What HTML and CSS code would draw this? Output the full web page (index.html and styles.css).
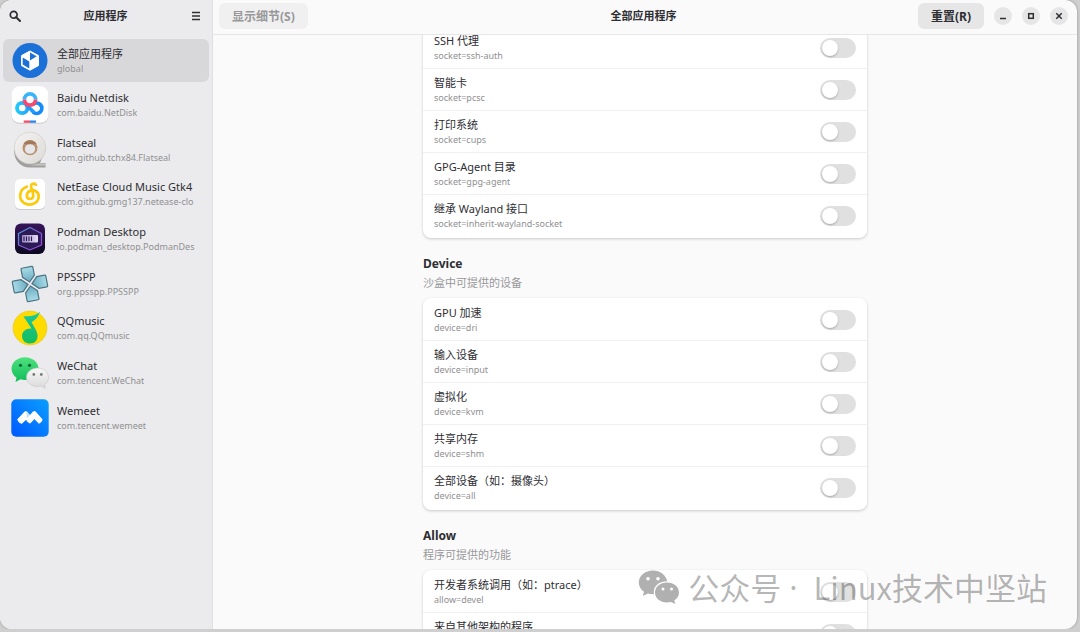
FILE: index.html
```html
<!DOCTYPE html>
<html lang="zh-CN">
<head>
    <meta charset="UTF-8"/>
    <title>全部应用程序</title>
    <link rel="stylesheet" href="styles.css">
</head>
<body>
<div class="window">
    <!-- Sidebar -->
    <aside class="sidebar">
        <div class="sidebar-header">
            <button class="icon-button" aria-label="搜索">
                <svg width="12" height="12" viewBox="0 0 12 12"><circle cx="4.7" cy="4.7" r="3.4" fill="none" stroke="#2e2e33" stroke-width="1.7"/><path d="M7.2 7.2L11 11" stroke="#2e2e33" stroke-width="2" stroke-linecap="round"/></svg>
            </button>
            <h2 class="title">应用程序</h2>
            <button class="icon-button" aria-label="菜单">
                <svg width="12" height="12" viewBox="0 0 12 12"><path d="M2 2.5h8M2 6h8M2 9.5h8" stroke="#2e2e33" stroke-width="1.7"/></svg>
            </button>
        </div>
        <nav class="app-list">
            <a href="#global" class="app active">
                <svg class="app-icon" viewBox="0 0 38 38">
                    <circle cx="19" cy="18.500" r="17.500" fill="#1c71d8"/>
                    <path d="M19 9l8.500 4.600v10L19 28.200l-8.500-4.600v-10z" fill="#fff" stroke="#fff" stroke-linejoin="round"/>
                    <path d="M11.700 15.500l6.600 4v7l-6.600-4zM19 10.500l6.700 3.800L19 18.500z" fill="#1c71d8"/>
                </svg>
                <span class="app-text"><span class="name">全部应用程序</span><span class="sub">global</span></span>
            </a>
            <a href="#baidu" class="app">
                <svg class="app-icon" viewBox="0 0 38 38">
                    <defs>
                        <linearGradient id="bl"><stop offset="0" stop-color="#1fc9fb"/><stop offset="1" stop-color="#24a5f9"/></linearGradient>
                    </defs>
                    <rect x=".5" y="1.3" width="37" height="36.5" rx="8" fill="#c9c9cb"/>
                    <rect x=".5" y=".3" width="37" height="36.5" rx="8" fill="#fff"/>
                    <g fill="none" stroke-width="3.800">
                        <circle cx="11.200" cy="22" r="5.200" stroke="url(#bl)"/>
                        <path d="M22 26a5.200 5.200 0 1 0 0-7.500" stroke="#168bfa"/>
                        <path d="M15 18.500l8 8" stroke="#1d9bfa"/>
                        <path d="M13.400 13.500a5.600 5.600 0 0 1 11.200 0" stroke="#38b5fb"/>
                        <path d="M13.400 13.500a5.600 5.600 0 0 0 11.200 0" stroke="#f7496c"/>
                    </g>
                    <path d="M12.700 34.500H19v2.300h-6.300z" fill="#f7496c"/>
                    <path d="M19 34.500h6v2.300h-6z" fill="#2485f5"/>
                </svg>
                <span class="app-text"><span class="name">Baidu Netdisk</span><span class="sub">com.baidu.NetDisk</span></span>
            </a>
            <a href="#flatseal" class="app">
                <svg class="app-icon" viewBox="0 0 38 38">
                    <defs>
                        <linearGradient id="roll" x1="0" y1="0" x2="1" y2="1"><stop offset="0" stop-color="#f4f3f1"/><stop offset="1" stop-color="#dddbd8"/></linearGradient>
                    </defs>
                    <path d="M3 19C3 29 9 36.500 19 36.500H34.500V32H29L35 18z" fill="#a0a09e"/>
                    <path d="M19 34.500h15.500v-2H28z" fill="#c6c5c3"/>
                    <ellipse cx="19" cy="17" rx="15.800" ry="16" fill="url(#roll)" stroke="#c4c2bf" stroke-width=".5"/>
                    <circle cx="19" cy="16.700" r="7.500" fill="#b9906f"/>
                    <path d="M12.500 13a7.500 7.500 0 0 1 13 0z" fill="#a27a5a"/>
                    <ellipse cx="19" cy="18" rx="5.200" ry="4.800" fill="#e6e6e8"/>
                </svg>
                <span class="app-text"><span class="name">Flatseal</span><span class="sub">com.github.tchx84.Flatseal</span></span>
            </a>
            <a href="#netease" class="app">
                <svg class="app-icon" viewBox="0 0 38 38">
                    <rect x="4" y="5" width="30" height="30" rx="5" fill="#cbcbcd"/>
                    <rect x="4" y="4" width="30" height="30" rx="5" fill="#fff"/>
                    <path d="M15.800 11.700C8 14.500 7 24 13 28c6 3.500 14.500.5 14.700-6.500.1-5.500-5.500-7.500-9-5.500-4.200 2.500-3.500 8 .3 8 3 0 3.700-2.500 3-5.500L20.200 12c-.7-3 2.200-4.300 4.800-2.300" fill="none" stroke="#fcc90b" stroke-width="2.700" stroke-linecap="round"/>
                </svg>
                <span class="app-text"><span class="name">NetEase Cloud Music Gtk4</span><span class="sub">com.github.gmg137.netease-clo</span></span>
            </a>
            <a href="#podman" class="app">
                <svg class="app-icon" viewBox="0 0 38 38">
                    <defs>
                        <linearGradient id="pod" x1="0" y1="0" x2="0" y2="1"><stop offset="0" stop-color="#37155c"/><stop offset="1" stop-color="#0c0820"/></linearGradient>
                        <linearGradient id="hex" x1="0" y1="0" x2="1" y2="1"><stop offset="0" stop-color="#4aa5d8"/><stop offset=".5" stop-color="#7a5fd6"/><stop offset="1" stop-color="#9f42d8"/></linearGradient>
                        <linearGradient id="bar"><stop offset="0" stop-color="#9d8cc9"/><stop offset="1" stop-color="#e5dcf5"/></linearGradient>
                    </defs>
                    <rect x="4" y="3.500" width="30" height="30.500" rx="6" fill="url(#pod)"/>
                    <path d="M19 7.500l11.500 6v11.500L19 30 7.500 25V13.500z" fill="#2c1a55" stroke="url(#hex)" stroke-width="1.300" stroke-linejoin="round"/>
                    <rect x="11" y="15" width="16" height="7.500" rx="1" fill="url(#bar)"/>
                    <path d="M13 16.500v4.500M15.500 16.500v4.500M18 16.500v4.500M20.500 16.500v4.500" stroke="#2b1b50" stroke-width="1.100"/>
                </svg>
                <span class="app-text"><span class="name">Podman Desktop</span><span class="sub">io.podman_desktop.PodmanDes</span></span>
            </a>
            <a href="#ppsspp" class="app">
                <svg class="app-icon" viewBox="0 0 38 38">
                    <defs>
                        <linearGradient id="pad" x1="0" y1="0" x2="0" y2="1"><stop offset="0" stop-color="#a9dbe8"/><stop offset="1" stop-color="#6aabc0"/></linearGradient>
                        <path id="blade" d="M-5 -17H5Q6 -17 6 -16V-8L0 -2L-6 -8V-16Q-6 -17 -5 -17Z" fill="url(#pad)" stroke="#4b7484" stroke-width="1.200"/>
                    </defs>
                    <g transform="translate(19 19) rotate(-11)">
                        <use href="#blade"/>
                        <use href="#blade" transform="rotate(90)"/>
                        <use href="#blade" transform="rotate(180)"/>
                        <use href="#blade" transform="rotate(270)"/>
                    </g>
                </svg>
                <span class="app-text"><span class="name">PPSSPP</span><span class="sub">org.ppsspp.PPSSPP</span></span>
            </a>
            <a href="#qqmusic" class="app">
                <svg class="app-icon" viewBox="0 0 38 38">
                    <defs>
                        <linearGradient id="note" x1="0" y1="0" x2="0" y2="1"><stop offset="0" stop-color="#1bc6a2"/><stop offset="1" stop-color="#12be5c"/></linearGradient>
                    </defs>
                    <circle cx="19" cy="19" r="17" fill="#ffdc00" stroke="#e0c52a" stroke-width=".6"/>
                    <path d="M29 2.500C25 7 20 7 12.500 7.500L20.500 19.500C15 19 11 22.500 11 27c0 5 4 7.500 8 7.500 5 0 8-3.500 7.500-8.500C26 21.500 23 18 20.500 13c2.500-1 6.500-4 8.500-10.500z" fill="url(#note)"/>
                </svg>
                <span class="app-text"><span class="name">QQmusic</span><span class="sub">com.qq.QQmusic</span></span>
            </a>
            <a href="#wechat" class="app">
                <svg class="app-icon" viewBox="0 0 38 38">
                    <defs>
                        <linearGradient id="wx" x1="0" y1="0" x2="0" y2="1"><stop offset="0" stop-color="#4fe07e"/><stop offset="1" stop-color="#0fbd58"/></linearGradient>
                        <linearGradient id="wy" x1="0" y1="0" x2="0" y2="1"><stop offset="0" stop-color="#f8f8f8"/><stop offset="1" stop-color="#dadada"/></linearGradient>
                    </defs>
                    <path d="M14 3.300C6.500 3.300.5 8.300.5 14.800c0 3.700 2 6.800 5 9L4.500 28l5-2.700c1.500.4 3 .6 4.500.6 7.500 0 13.500-4.600 13.500-11.100S21.500 3.300 14 3.300z" fill="url(#wx)"/>
                    <circle cx="9.500" cy="11.300" r="1.600" fill="#0b6b35"/><circle cx="18.500" cy="11.300" r="1.600" fill="#0b6b35"/>
                    <path d="M26.500 14C20.500 14 15.500 18 15.500 23.300s5 9.300 11 9.300c1.400 0 2.700-.2 3.800-.5l4 2.200-.9-3.500c2.600-1.800 4.100-4.300 4.100-7.500C37.500 18 32.500 14 26.500 14z" fill="url(#wy)" stroke="#c4c4c4" stroke-width=".6"/>
                    <circle cx="22.800" cy="20.500" r="1.400" fill="#7c7c7c"/><circle cx="30.300" cy="20.500" r="1.400" fill="#7c7c7c"/>
                </svg>
                <span class="app-text"><span class="name">WeChat</span><span class="sub">com.tencent.WeChat</span></span>
            </a>
            <a href="#wemeet" class="app">
                <svg class="app-icon" viewBox="0 0 38 38">
                    <defs>
                        <linearGradient id="meet" x1="1" y1="0" x2="0" y2="1"><stop offset="0" stop-color="#0aa0ff"/><stop offset="1" stop-color="#0058ff"/></linearGradient>
                    </defs>
                    <rect x=".3" y=".3" width="37.400" height="37.400" rx="5" fill="url(#meet)"/>
                    <path d="M6.300 20.500L13.800 12.500q1.200-1 2.400 0L23 20.500 19 24.500 15 20.500l-4.300 4.200z" fill="#c3dcff"/>
                    <path d="M6.300 20.500l7-7.500q1.500-1.300 2.200.5L16 20l-5.300 4.700q-3-.5-4.400-4.200zM15 20.500l7-8q1.300-1.200 2.600 0l7.100 8q-.7 3-3.700 4.200L23.300 20 19 24.500q-3-1-4-4z" fill="#fff"/>
                </svg>
                <span class="app-text"><span class="name">Wemeet</span><span class="sub">com.tencent.wemeet</span></span>
            </a>
        </nav>
    </aside>

    <!-- Permissions -->
    <main class="content">
        <header class="header">
            <div class="header-start"><button class="button" disabled>显示细节(S)</button></div>
            <h1 class="title">全部应用程序</h1>
            <div class="header-end">
                <button class="button">重置(R)</button>
                <button class="control" aria-label="最小化"><svg width="8" height="8" viewBox="0 0 8 8"><path d="M1 6.500h6" stroke="#2e2e33" stroke-width="1.500"/></svg></button>
                <button class="control" aria-label="最大化"><svg width="8" height="8" viewBox="0 0 8 8"><rect x="1.700" y="1.700" width="4.600" height="4.600" fill="none" stroke="#2e2e33" stroke-width="1.500"/></svg></button>
                <button class="control" aria-label="关闭"><svg width="8" height="8" viewBox="0 0 8 8"><path d="M1.300 1.300l5.400 5.400M6.700 1.300L1.300 6.700" stroke="#2e2e33" stroke-width="1.500"/></svg></button>
            </div>
        </header>
        <div class="scroller">
            <div class="settings">
                <section class="group">
                    <div class="card">
                        <label class="row"><span class="row-text"><span class="name">SSH 代理</span><span class="sub">socket=ssh-auth</span></span><input type="checkbox" class="switch"></label>
                        <label class="row"><span class="row-text"><span class="name">智能卡</span><span class="sub">socket=pcsc</span></span><input type="checkbox" class="switch"></label>
                        <label class="row"><span class="row-text"><span class="name">打印系统</span><span class="sub">socket=cups</span></span><input type="checkbox" class="switch"></label>
                        <label class="row"><span class="row-text"><span class="name">GPG-Agent 目录</span><span class="sub">socket=gpg-agent</span></span><input type="checkbox" class="switch"></label>
                        <label class="row"><span class="row-text"><span class="name">继承 Wayland 接口</span><span class="sub">socket=inherit-wayland-socket</span></span><input type="checkbox" class="switch"></label>
                    </div>
                </section>
                <section class="group">
                    <h3 class="group-title">Device</h3>
                    <p class="group-info">沙盒中可提供的设备</p>
                    <div class="card">
                        <label class="row"><span class="row-text"><span class="name">GPU 加速</span><span class="sub">device=dri</span></span><input type="checkbox" class="switch"></label>
                        <label class="row"><span class="row-text"><span class="name">输入设备</span><span class="sub">device=input</span></span><input type="checkbox" class="switch"></label>
                        <label class="row"><span class="row-text"><span class="name">虚拟化</span><span class="sub">device=kvm</span></span><input type="checkbox" class="switch"></label>
                        <label class="row"><span class="row-text"><span class="name">共享内存</span><span class="sub">device=shm</span></span><input type="checkbox" class="switch"></label>
                        <label class="row"><span class="row-text"><span class="name">全部设备（如：摄像头）</span><span class="sub">device=all</span></span><input type="checkbox" class="switch"></label>
                    </div>
                </section>
                <section class="group">
                    <h3 class="group-title">Allow</h3>
                    <p class="group-info">程序可提供的功能</p>
                    <div class="card">
                        <label class="row"><span class="row-text"><span class="name">开发者系统调用（如：ptrace）</span><span class="sub">allow=devel</span></span><input type="checkbox" class="switch"></label>
                        <label class="row"><span class="row-text"><span class="name">来自其他架构的程序</span></span><input type="checkbox" class="switch"></label>
                    </div>
                </section>
            </div>
        </div>
    </main>
</div>

<div class="watermark">
    <svg width="42" height="34" viewBox="0 0 42 34">
        <path d="M15 .5C7 .5.8 5.600.8 12.500c0 3.900 2 7 5.200 9.300L4.800 26l5.200-2.600c1.600.5 3.200.8 5 .8h1C14.500 16.500 21 11 29.300 11.200 28 5 22 .5 15 .5z" fill="#b0b0b0"/>
        <path d="M29 12.500c-6.800 0-12 4.300-12 10s5.200 10 12 10c1.500 0 2.800-.2 4-.5l4.300 2-1-3.600c2.900-1.900 4.700-4.700 4.700-7.900 0-5.700-5.200-10-12-10z" fill="#b0b0b0"/>
        <g fill="#fff"><circle cx="10" cy="8.700" r="1.800"/><circle cx="20" cy="8.700" r="1.800"/><circle cx="25" cy="19" r="1.500"/><circle cx="33.500" cy="19" r="1.500"/></g>
    </svg>
    <span>公众号</span>
    <span class="dot">·</span>
    <span>Linux技术中坚站</span>
</div>
</body>
</html>
```

FILE: styles.css
```css
body {
margin: 0;
background-color: #cfcfcf;
font-family: "Noto Sans", "Noto Sans CJK SC", sans-serif;
font-size: 11px;
color: #2e2e33;
}
* {
box-sizing: border-box;
}
.window {
display: grid;
grid-template-columns: 213px 1fr;
height: calc(100vh - 3px);
margin-right: 3px;
border-radius: 12px;
overflow: hidden;
background-color: #fafafa;
box-shadow: 0 0 3px rgba(0, 0, 0, 0.3);
}
button {
font-family: inherit;
font-size: 12px;
color: inherit;
border: none;
padding: 0;
}
svg {
display: block;
}
/* Sidebar */
.sidebar {
background-color: #ebebed;
border-right: 1px solid #e0e0e2;
}
.sidebar-header {
display: flex;
align-items: center;
justify-content: space-between;
height: 32px;
padding: 0 6px 0 5px;
}
.icon-button {
display: flex;
align-items: center;
justify-content: center;
width: 20px;
height: 20px;
background: none;
}
.title {
margin: 0;
font-size: 11px;
font-weight: bold;
line-height: 16px;
}
.app-list {
display: flex;
flex-direction: column;
justify-content: space-between;
min-height: 400px;
margin: 7px 3px 0;
}
.app {
display: flex;
align-items: center;
gap: 8px;
height: 43px;
padding: 0 8px;
border-radius: 6px;
color: inherit;
text-decoration: none;
}
.app.active {
background-color: #d8d8da;
}
.app-icon {
width: 38px;
height: 38px;
flex-shrink: 0;
}
.app-text {
overflow: hidden;
white-space: nowrap;
}
.name {
display: block;
font-size: 11px;
line-height: 16px;
}
.sub {
display: block;
font-size: 9px;
line-height: 14px;
color: #909092;
}
/* Header bar */
.content {
display: flex;
flex-direction: column;
min-width: 0;
min-height: 0;
}
.header {
display: grid;
grid-template-columns: 1fr auto 1fr;
align-items: center;
height: 35px;
padding: 0 9px 3px 6px;
border-bottom: 1px solid #e6e6e6;
}
.header-end {
display: flex;
align-items: center;
justify-content: flex-end;
gap: 10px;
}
.button {
height: 26px;
padding: 0 13px;
border-radius: 6px;
background-color: #e6e6e6;
font-weight: bold;
}
.button:disabled {
background-color: #f0f0f0;
color: #98989a;
}
.control {
display: flex;
align-items: center;
justify-content: center;
width: 18px;
height: 18px;
border-radius: 50%;
background-color: #e6e6e6;
}
/* Permission groups */
.scroller {
flex: 1;
min-height: 0;
overflow: hidden;
}
.settings {
max-width: 444px;
margin: -9px auto 0;
}
.group {
margin-bottom: 17px;
}
.group-title {
margin: 0;
font-size: 12px;
line-height: 18px;
}
.group-info {
margin: 0 0 6px;
line-height: 19px;
color: #98989a;
}
.card {
padding: 1px 0;
border-radius: 8px;
background-color: #fff;
box-shadow: 0 1px 3px rgba(0, 0, 0, 0.2);
}
.row {
display: flex;
align-items: center;
justify-content: space-between;
height: 42px;
padding: 0 11px;
border-bottom: 1px solid #f0f0f0;
}
.row:last-child {
border-bottom: none;
}
.row-text {
min-height: 30px;
}
.switch {
appearance: none;
display: flex;
align-items: center;
width: 36px;
height: 20px;
margin: 0;
padding: 2px;
border-radius: 10px;
background-color: #e0e0e0;
}
.switch::before {
content: "";
width: 16px;
height: 16px;
border-radius: 50%;
background-color: #fff;
box-shadow: 0 1px 2px rgba(0, 0, 0, 0.25);
}
.switch:checked {
justify-content: flex-end;
background-color: #1c71d8;
}
/* Lies over the window */
.watermark {
position: absolute;
right: 33px;
bottom: 24px;
display: flex;
align-items: center;
gap: 8px;
font-family: "Noto Sans CJK SC", sans-serif;
font-size: 31px;
line-height: 42px;
color: rgba(0, 0, 0, 0.3);
}
.dot {
margin-right: 8px;
font-family: "Noto Sans", sans-serif;
}
```
